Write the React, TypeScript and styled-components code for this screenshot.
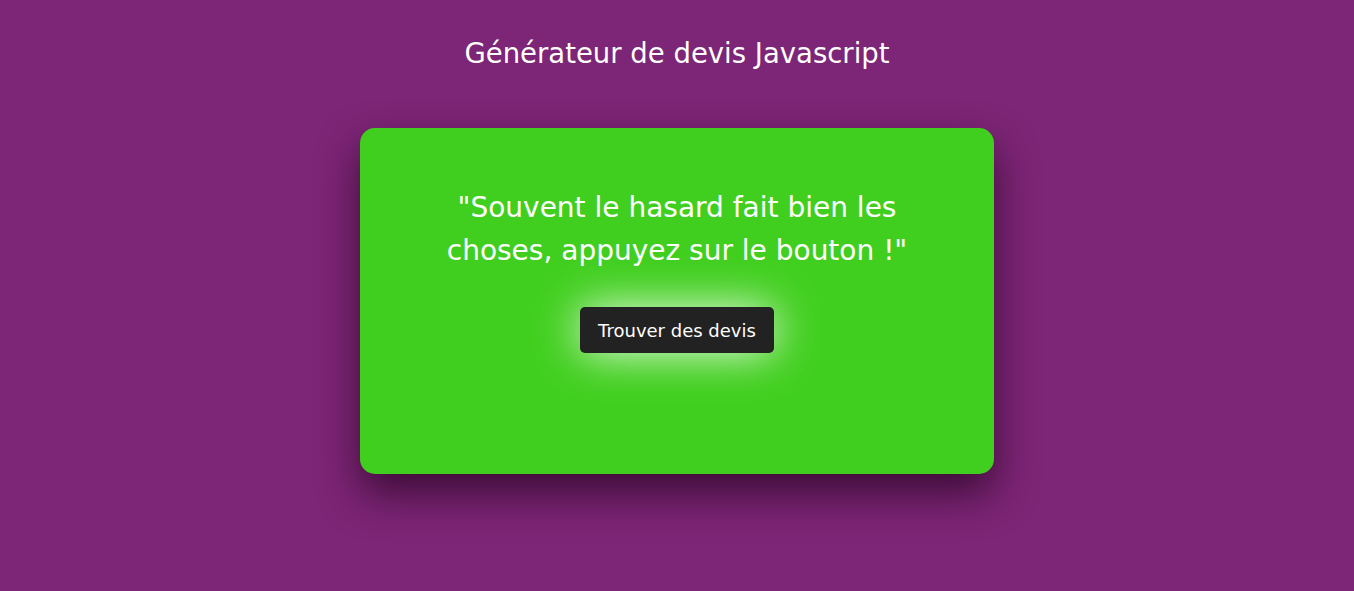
import styled, { createGlobalStyle } from 'styled-components'

const GlobalStyle = createGlobalStyle`
  html, body {
    margin: 0;
    padding: 0;
    background: #7d2576;
    font-family: "DejaVu Sans", "Open Sans", sans-serif;
  }
`

const Page = styled.div`
  min-height: 591px;
  display: flex;
  flex-direction: column;
  align-items: center;
  padding-top: 34px;
  box-sizing: border-box;
`

const Title = styled.h1`
  margin: 0;
  color: #ffffff;
  font-size: 27.5px;
  font-weight: 400;
  line-height: 38px;
`

const Card = styled.div`
  margin-top: 56px;
  width: 634px;
  height: 346px;
  box-sizing: border-box;
  background: #41cf1f;
  border-radius: 15px;
  box-shadow: 0 20px 40px rgba(40, 5, 35, 0.75);
  display: flex;
  flex-direction: column;
  align-items: center;
  padding-top: 58px;
`

const Quote = styled.p`
  margin: 0;
  width: 520px;
  color: #ffffff;
  font-size: 28px;
  line-height: 43px;
  text-align: center;
`

const Button = styled.button`
  margin-top: 35px;
  height: 46px;
  padding: 0 18px;
  border: none;
  border-radius: 5px;
  background: #222222;
  color: #ffffff;
  font-family: inherit;
  font-size: 18px;
  cursor: pointer;
  box-shadow: 0 0 45px rgba(255, 255, 255, 0.9);
`

const App = () => {
  return (
    <Page>
      <GlobalStyle />
      <Title>Générateur de devis Javascript</Title>
      <Card>
        <Quote>"Souvent le hasard fait bien les choses, appuyez sur le bouton !"</Quote>
        <Button>Trouver des devis</Button>
      </Card>
    </Page>
  )
}

export default App
